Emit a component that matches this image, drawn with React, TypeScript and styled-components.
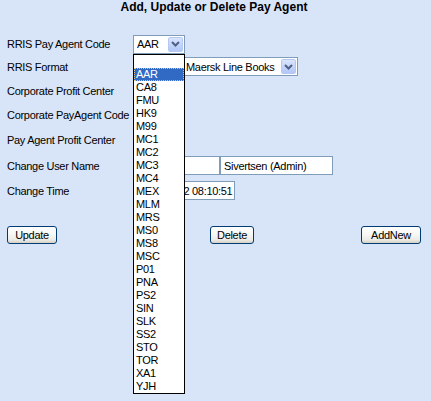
import React from "react";
import styled, { createGlobalStyle } from "styled-components";

const GlobalStyle = createGlobalStyle`
  html, body { margin: 0; padding: 0; background: #d8e4f8; }
  body { font-family: "Liberation Sans", Arial, sans-serif; font-size: 11px; color: #000; }
  * { box-sizing: border-box; }
`;

const Page = styled.div`
  width: 431px;
  height: 401px;
  padding: 0 10px 0 7px;
  background: #d8e4f8;
  overflow: hidden;
`;

const Title = styled.h1`
  margin: 0;
  height: 14px;
  line-height: 14px;
  font-size: 12px;
  font-weight: bold;
  text-align: center;
  white-space: nowrap;
`;

const Form = styled.div`
  margin-top: 19px;
  display: flex;
  flex-direction: column;
`;

const Row = styled.div<{ $h: number }>`
  display: grid;
  grid-template-columns: 126px 1fr;
  align-items: center;
  height: ${(p) => p.$h}px;
`;

const Label = styled.span`
  letter-spacing: -0.3px;
  white-space: nowrap;
`;

const Field = styled.div`
  display: flex;
  align-items: center;
`;

const TextBox = styled.input<{ $w: number; $pad?: number; $ml?: number }>`
  width: ${(p) => p.$w}px;
  height: 19px;
  margin: 0 0 0 ${(p) => p.$ml ?? 0}px;
  padding: 0 0 0 ${(p) => p.$pad ?? 2}px;
  border: 1px solid #7f9db9;
  border-radius: 0;
  background: #fff;
  font-family: inherit;
  font-size: 11px;
  letter-spacing: -0.3px;
  color: #000;
  outline: none;
`;

const Combo = styled.div<{ $w: number; $ml?: number }>`
  position: relative;
  width: ${(p) => p.$w}px;
  height: 19px;
  margin-left: ${(p) => p.$ml ?? 0}px;
  border: 1px solid #7f9db9;
  background: #fff;
  display: flex;
  align-items: center;
  padding: 0 1px 0 3px;
`;

const ComboText = styled.span`
  flex: 1;
  letter-spacing: -0.3px;
  white-space: nowrap;
  overflow: hidden;
`;

const ArrowBtn = styled.span`
  width: 15px;
  height: 15px;
  border: 1px solid #b5c8f3;
  border-radius: 2px;
  background: linear-gradient(180deg, #dbe6fd 0%, #c3d4fa 55%, #b2c7f6 100%);
  display: flex;
  align-items: center;
  justify-content: center;
`;

const ListBox = styled.ul`
  position: absolute;
  top: calc(100% + 1px);
  left: -1px;
  width: 52px;
  margin: 0;
  padding: 0;
  list-style: none;
  background: #fff;
  border: 1px solid #000;
  z-index: 10;
`;

const Option = styled.li<{ $selected?: boolean }>`
  height: 13px;
  line-height: 13px;
  padding-left: 2px;
  letter-spacing: -0.3px;
  white-space: nowrap;
  color: ${(p) => (p.$selected ? "#fff" : "#000")};
  background: ${(p) => (p.$selected ? "#316ac5" : "transparent")};
  outline: ${(p) => (p.$selected ? "1px dotted #e9c46a" : "none")};
  outline-offset: -1px;
`;

const ButtonRow = styled.div`
  margin-top: 23px;
  display: flex;
  align-items: center;
`;

const Button = styled.button<{ $w: number; $ml?: string }>`
  width: ${(p) => p.$w}px;
  height: 18px;
  margin: 0 0 0 ${(p) => p.$ml ?? "0"};
  padding: 0;
  border: 1px solid #003c74;
  border-radius: 3px;
  background: linear-gradient(180deg, #ffffff 0%, #f7f7f4 45%, #ecebe6 80%, #d6d0c5 100%);
  font-family: inherit;
  font-size: 11px;
  letter-spacing: -0.3px;
  line-height: 16px;
  color: #000;
`;

const Chevron = () => (
  <svg width="9" height="6" viewBox="0 0 9 6">
    <path d="M1 1 L4.5 4.5 L8 1" stroke="#4d6185" strokeWidth="2" fill="none" />
  </svg>
);

const codes = [
  "", "AAR", "CA8", "FMU", "HK9", "M99", "MC1", "MC2", "MC3", "MC4", "MEX",
  "MLM", "MRS", "MS0", "MS8", "MSC", "P01", "PNA", "PS2", "SIN", "SLK",
  "SS2", "STO", "TOR", "XA1", "YJH",
];

export default function App() {
  return (
    <>
      <GlobalStyle />
      <Page>
        <Title>Add, Update or Delete Pay Agent</Title>
        <Form>
          <Row $h={22}>
            <Label>RRIS Pay Agent Code</Label>
            <Field>
              <Combo $w={52}>
                <ComboText>AAR</ComboText>
                <ArrowBtn><Chevron /></ArrowBtn>
                <ListBox role="listbox">
                  {codes.map((c, i) => (
                    <Option key={i} $selected={c === "AAR"}>{c || "\u00a0"}</Option>
                  ))}
                </ListBox>
              </Combo>
            </Field>
          </Row>
          <Row $h={23}>
            <Label>RRIS Format</Label>
            <Field>
              <TextBox $w={48} defaultValue="" />
              <Combo $w={116} $ml={1}>
                <ComboText>Maersk Line Books</ComboText>
                <ArrowBtn><Chevron /></ArrowBtn>
              </Combo>
            </Field>
          </Row>
          <Row $h={25}>
            <Label>Corporate Profit Center</Label>
            <Field><TextBox $w={48} defaultValue="" /></Field>
          </Row>
          <Row $h={24}>
            <Label>Corporate PayAgent Code</Label>
            <Field><TextBox $w={48} defaultValue="" /></Field>
          </Row>
          <Row $h={26}>
            <Label>Pay Agent Profit Center</Label>
            <Field><TextBox $w={48} defaultValue="" /></Field>
          </Row>
          <Row $h={25}>
            <Label>Change User Name</Label>
            <Field>
              <TextBox $w={87} defaultValue="" />
              <TextBox $w={113} $pad={3} defaultValue="Sivertsen (Admin)" />
            </Field>
          </Row>
          <Row $h={25}>
            <Label>Change Time</Label>
            <Field>
              <TextBox $w={102} defaultValue="12-03-2012 08:10:51" />
            </Field>
          </Row>
        </Form>
        <ButtonRow>
          <Button $w={50}>Update</Button>
          <Button $w={44} $ml="153px">Delete</Button>
          <Button $w={60} $ml="auto">AddNew</Button>
        </ButtonRow>
      </Page>
    </>
  );
}
